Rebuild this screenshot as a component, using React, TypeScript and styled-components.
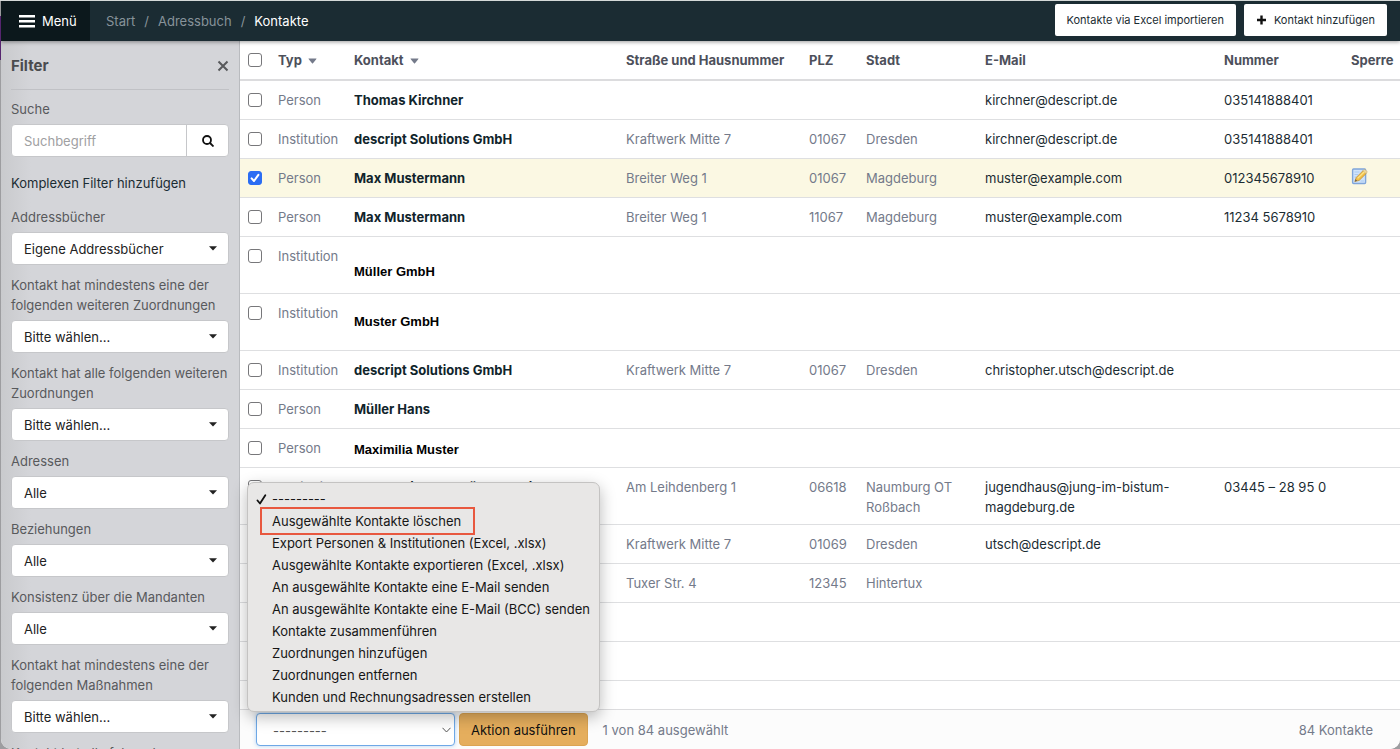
import React from 'react';
import styled, { createGlobalStyle, css } from 'styled-components';

const Global = createGlobalStyle`
  * { box-sizing: border-box; }
  html, body { margin: 0; height: 100%; }
  body {
    background: #a9a9ab;
    color: #1b2c33;
    font-family: Inter, "Liberation Sans", sans-serif;
    font-size: 13px;
    line-height: 20px;
  }
  button, input, select { font: inherit; color: inherit; margin: 0; }
  a { color: inherit; text-decoration: none; }
`;

const Desktop = styled.div`
  height: 100vh;
  padding: 1px 0 0 1px;
  background: linear-gradient(#d5d9d8 0 1px, #9a9a9c 1px 16px, #56256f 16px 60px, #9d9da0 60px);
`;

const Window = styled.div`
  display: flex;
  flex-direction: column;
  height: 100%;
  overflow: hidden;
  background: #fff;
  border-radius: 0 0 10px 10px;
`;

const TopBar = styled.header`
  position: relative;
  z-index: 1;
  display: flex;
  align-items: stretch;
  flex: none;
  height: 40px;
  padding-right: 13px;
  background: #1b2c33;
  box-shadow: 0 1px 4px rgba(0, 0, 0, 0.4);
`;

const MenuButton = styled.button`
  display: flex;
  align-items: center;
  gap: 7px;
  width: 89px;
  padding: 0 0 0 18px;
  border: 0;
  background: #0c181c;
  color: #fff;
`;

const Crumbs = styled.nav`
  display: flex;
  flex: 1;
  align-items: center;
  gap: 9px;
  padding-left: 16px;
  color: #87939a;
`;

const Crumb = styled.a<{ $current?: boolean }>`
  color: ${p => (p.$current ? '#fff' : '#87939a')};
`;

const Actions = styled.div`
  display: flex;
  align-items: flex-start;
  gap: 8px;
  padding-top: 3px;
`;

const ActionButton = styled.button`
  display: flex;
  align-items: center;
  gap: 7px;
  height: 32px;
  padding: 0 12px;
  border: 0;
  border-radius: 2px;
  background: #fff;
  font-size: 11px;
`;

const Body = styled.div`
  display: flex;
  flex: 1;
  min-height: 0;
`;

const Sidebar = styled.aside`
  flex: none;
  width: 239px;
  overflow: hidden;
  padding: 15px 10px 0;
  border-right: 1px solid #b9bbbf;
  background: linear-gradient(90deg, #c9cacd, #d4d5d9 30px);
  color: #58595c;
`;

const SidebarHead = styled.div`
  display: flex;
  align-items: center;
  justify-content: space-between;
  padding-bottom: 13px;
  margin-bottom: 9px;
  border-bottom: 1px solid #c0c1c5;
`;

const SidebarTitle = styled.h2`
  margin: 0;
  font-size: 15px;
  font-weight: 700;
  color: #4b4c4f;
`;

const CloseButton = styled.button`
  display: flex;
  padding: 0;
  border: 0;
  background: none;
  color: #58595c;
`;

const Label = styled.label`
  display: block;
  margin-bottom: 5px;
`;

const SearchGroup = styled.div`
  display: flex;
  height: 33px;
  border: 1px solid #c6c7ca;
  border-radius: 4px;
  overflow: hidden;
  background: #fff;
`;

const SearchInput = styled.input`
  flex: 1;
  min-width: 0;
  padding: 0 12px;
  border: 0;
  border-right: 1px solid #c6c7ca;
  background: none;
  &::placeholder { color: #a0a0a2; opacity: 1; }
`;

const SearchButton = styled.button`
  display: flex;
  align-items: center;
  justify-content: center;
  width: 41px;
  padding: 0;
  border: 0;
  background: none;
  color: #111;
`;

const FilterLink = styled.a`
  display: block;
  margin: 16px 0 14px;
  color: #1b2c33;
`;

const Field = styled.div`
  margin-bottom: 10px;
`;

const SelectWrap = styled.div`
  position: relative;
  display: flex;
  align-items: center;
`;

const SelectBox = styled.select<{ $active?: boolean }>`
  appearance: none;
  width: 100%;
  height: 33px;
  padding: 0 28px 0 12px;
  border: 1px solid #c6c7ca;
  border-radius: 4px;
  background: #fff;
  color: #222;
  ${p => p.$active && css`
    padding-left: 16px;
    border-color: #6ea8e6;
    box-shadow: 0 0 4px rgba(90, 160, 235, 0.45);
    color: #555;
  `}
`;

const SelectArrow = styled.svg<{ $inset: number }>`
  position: absolute;
  right: ${p => p.$inset}px;
  pointer-events: none;
`;

const Main = styled.main`
  display: flex;
  flex: 1;
  flex-direction: column;
  min-width: 0;
`;

const TableArea = styled.div`
  flex: 1;
  min-height: 0;
  overflow: hidden;
`;

const Table = styled.table`
  width: 100%;
  table-layout: fixed;
  border-collapse: separate;
  border-spacing: 0;
`;

const HeadCell = styled.th`
  height: 40px;
  padding: 0 0 0 8px;
  border-bottom: 2px solid #dcdcde;
  color: #4d505b;
  font-weight: 700;
  text-align: left;
  white-space: nowrap;
`;

const Row = styled.tr<{ $selected?: boolean; $tall?: boolean }>`
  height: ${p => (p.$tall ? 57 : 39)}px;
  background: ${p => (p.$selected ? '#fbf8e3' : '#fff')};
`;

const Cell = styled.td<{ $dark?: boolean }>`
  padding: 9px 8px 7px;
  border-bottom: 1px solid #dedfe1;
  color: ${p => (p.$dark ? '#1b2c33' : '#747a8a')};
  vertical-align: top;
`;

const NameCell = styled(Cell)`
  color: #10242b;
  font-weight: 700;
  white-space: nowrap;
`;

const PlainNameCell = styled(Cell)<{ $align: string }>`
  padding-bottom: ${p => (p.$align === 'top' ? 5 : 9)}px;
  color: #000;
  font-family: "Liberation Sans", Arial, sans-serif;
  font-weight: 700;
  line-height: 24px;
  vertical-align: ${p => p.$align};
`;

const SortArrow = styled.svg`
  margin-left: 6px;
  vertical-align: middle;
`;

const Check = styled.input`
  appearance: none;
  display: block;
  width: 14px;
  height: 14px;
  margin: 3px 0;
  border: 1px solid #77777a;
  border-radius: 3px;
  background: #fff;
  &:checked {
    border-color: #2b6df3;
    background: #2b6df3;
  }
`;

const CheckWrap = styled.span`
  position: relative;
  display: block;
  width: 14px;
`;

const CheckMark = styled.svg`
  position: absolute;
  inset: 0;
  pointer-events: none;
`;

const NoteGlyph = styled.svg`
  display: block;
`;

const Footer = styled.footer`
  display: flex;
  flex: none;
  align-items: flex-start;
  height: 40px;
  padding: 3px 27px 0 16px;
  border-top: 1px solid #dcdcde;
  background: #fcfcfc;
  color: #747a8a;
  line-height: 34px;
`;

const ActionPicker = styled(SelectWrap)`
  width: 199px;
  margin-right: 4px;
`;

const RunButton = styled.button`
  display: flex;
  align-items: center;
  height: 33px;
  padding: 0 11px;
  margin-right: 15px;
  border: 1px solid #dba452;
  border-radius: 4px;
  background: #e5ae5d;
  color: #111;
`;

const Total = styled.span`
  margin-left: auto;
`;

const Popup = styled.ul`
  position: absolute;
  bottom: 34px;
  left: -9px;
  width: 353px;
  margin: 0;
  padding: 5px 0 3px;
  border: 1px solid #c4c3c2;
  border-radius: 7px;
  background: #e8e7e6;
  box-shadow: 0 5px 16px rgba(0, 0, 0, 0.28);
  list-style: none;
`;

const PopupItem = styled.li<{ $marked?: boolean }>`
  display: flex;
  align-items: center;
  height: 22px;
  padding-left: 8px;
  color: #161616;
  white-space: nowrap;
  ${p => p.$marked && css`
    width: 215px;
    height: 28px;
    margin: -3px 0 -3px 12px;
    padding-left: 0;
    border: 2px solid #e8583f;
    & > span:first-child { width: 10px; }
  `}
`;

const Tick = styled.span`
  display: flex;
  width: 16px;
`;

type Contact = {
  type?: string;
  name?: string;
  plain?: 'top' | 'middle' | 'bottom';
  street?: string;
  zip?: string;
  city?: string;
  mail?: string;
  phone?: string;
  selected?: boolean;
  tall?: boolean;
};

const contacts: Contact[] = [
  { type: 'Person', name: 'Thomas Kirchner', mail: 'kirchner@descript.de', phone: '035141888401' },
  { type: 'Institution', name: 'descript Solutions GmbH', street: 'Kraftwerk Mitte 7', zip: '01067', city: 'Dresden', mail: 'kirchner@descript.de', phone: '035141888401' },
  { type: 'Person', name: 'Max Mustermann', street: 'Breiter Weg 1', zip: '01067', city: 'Magdeburg', mail: 'muster@example.com', phone: '012345678910', selected: true },
  { type: 'Person', name: 'Max Mustermann', street: 'Breiter Weg 1', zip: '11067', city: 'Magdeburg', mail: 'muster@example.com', phone: '11234 5678910' },
  { type: 'Institution', name: 'Müller GmbH', plain: 'bottom', tall: true },
  { type: 'Institution', name: 'Muster GmbH', plain: 'middle', tall: true },
  { type: 'Institution', name: 'descript Solutions GmbH', street: 'Kraftwerk Mitte 7', zip: '01067', city: 'Dresden', mail: 'christopher.utsch@descript.de' },
  { type: 'Person', name: 'Müller Hans' },
  { type: 'Person', name: 'Maximilia Muster', plain: 'top' },
  { type: 'Institution', name: 'Jugendbildungsstätte St. Michael', street: 'Am Leihdenberg 1', zip: '06618', city: 'Naumburg OT Roßbach', mail: 'jugendhaus@jung-im-bistum-magdeburg.de', phone: '03445 – 28 95 0', tall: true },
  { street: 'Kraftwerk Mitte 7', zip: '01069', city: 'Dresden', mail: 'utsch@descript.de' },
  { street: 'Tuxer Str. 4', zip: '12345', city: 'Hintertux' },
  {},
  {},
  {},
];

const filters = [
  ['Addressbücher', 'Eigene Addressbücher'],
  ['Kontakt hat mindestens eine der folgenden weiteren Zuordnungen', 'Bitte wählen...'],
  ['Kontakt hat alle folgenden weiteren Zuordnungen', 'Bitte wählen...'],
  ['Adressen', 'Alle'],
  ['Beziehungen', 'Alle'],
  ['Konsistenz über die Mandanten', 'Alle'],
  ['Kontakt hat mindestens eine der folgenden Maßnahmen', 'Bitte wählen...'],
  ['Kontakt hat alle folgenden Maßnahmen', 'Bitte wählen...'],
];

const actions = [
  '---------',
  'Ausgewählte Kontakte löschen',
  'Export Personen & Institutionen (Excel, .xlsx)',
  'Ausgewählte Kontakte exportieren (Excel, .xlsx)',
  'An ausgewählte Kontakte eine E-Mail senden',
  'An ausgewählte Kontakte eine E-Mail (BCC) senden',
  'Kontakte zusammenführen',
  'Zuordnungen hinzufügen',
  'Zuordnungen entfernen',
  'Kunden und Rechnungsadressen erstellen',
];

const columns = [30, 76, 272, 183, 57, 119, 239, 127, 57];

function Checkbox({ label, checked }: { label: string; checked?: boolean }) {
  return (
    <CheckWrap>
      <Check type="checkbox" aria-label={label} defaultChecked={checked} />
      {checked && (
        <CheckMark width="14" height="14" viewBox="0 0 14 14" fill="none" stroke="#fff" strokeWidth="2" strokeLinecap="round" strokeLinejoin="round">
          <path d="M3.6 7.4 6 10 10.4 3.8" />
        </CheckMark>
      )}
    </CheckWrap>
  );
}

function Sort() {
  return (
    <SortArrow width="9" height="6" viewBox="0 0 9 6" fill="#747a8a">
      <path d="M.8.4h7.4q.6 0 .2.6L5 5.2q-.5.5-1 0L.6 1Q.2.4.8.4z" />
    </SortArrow>
  );
}

function NoteIcon() {
  return (
    <NoteGlyph width="17" height="17" viewBox="0 0 17 17">
      <rect x="1.600" y="1" width="13" height="14.500" rx="1" fill="#cfe3fa" stroke="#7fa5da" strokeWidth="1.400" />
      <path d="M3.500 4h5M3.500 6.500h3.500M3.500 9h2M9.500 13h3.500" stroke="#a9caf2" />
      <path d="M3.800 13.600 5.200 9.500 12 2.700 15 5.700 8.200 12.400z" fill="#f2bf45" stroke="#b58a3c" strokeWidth=".7" />
      <path d="M12 2.700 13 1.700q.7-.5 1.300.1l1.500 1.500q.6.600 0 1.300L15 5.700z" fill="#efd9a0" stroke="#c8a96a" strokeWidth=".6" />
      <path d="M6.600 10.400 13.400 3.700" stroke="#fbe48a" strokeWidth="1.300" />
      <path d="m3.800 13.600.8-2.300 1.600 1.500z" fill="#6b5a45" />
    </NoteGlyph>
  );
}

export default function App() {
  return (
    <>
      <Global />
      <Desktop>
        <Window>
          <TopBar>
            <MenuButton type="button">
              <svg width="16" height="14" viewBox="0 0 16 14" fill="#fff">
                <path d="M0 1h16v2.400H0zM0 6h16v2.400H0zM0 11h16v2.400H0z" />
              </svg>
              Menü
            </MenuButton>
            <Crumbs>
              <Crumb href="#start">Start</Crumb>
              <span>/</span>
              <Crumb href="#adressbuch">Adressbuch</Crumb>
              <span>/</span>
              <Crumb href="#kontakte" $current>Kontakte</Crumb>
            </Crumbs>
            <Actions>
              <ActionButton type="button">Kontakte via Excel importieren</ActionButton>
              <ActionButton type="button">
                <svg width="11" height="10" viewBox="0 0 11 10" stroke="#111" strokeWidth="2.400">
                  <path d="M5.500 .5v9M1 5h9" />
                </svg>
                Kontakt hinzufügen
              </ActionButton>
            </Actions>
          </TopBar>
          <Body>
            <Sidebar>
              <SidebarHead>
                <SidebarTitle>Filter</SidebarTitle>
                <CloseButton type="button" aria-label="Filter schließen">
                  <svg width="12" height="12" viewBox="0 0 12 12" stroke="currentColor" strokeWidth="2">
                    <path d="m1.500 1.500 9 9M10.500 1.500l-9 9" />
                  </svg>
                </CloseButton>
              </SidebarHead>
              <Label htmlFor="suche">Suche</Label>
              <SearchGroup>
                <SearchInput id="suche" placeholder="Suchbegriff" />
                <SearchButton type="button" aria-label="Suchen">
                  <svg width="12" height="12" viewBox="0 0 12 12" fill="none" stroke="currentColor" strokeWidth="1.800">
                    <circle cx="5" cy="5" r="4" />
                    <path d="m8 8 3.500 3.500" />
                  </svg>
                </SearchButton>
              </SearchGroup>
              <FilterLink href="#filter">Komplexen Filter hinzufügen</FilterLink>
              {filters.map(([label, value], i) => (
                <Field key={label}>
                  <Label htmlFor={`filter-${i}`}>{label}</Label>
                  <SelectWrap>
                    <SelectBox id={`filter-${i}`}>
                      <option>{value}</option>
                    </SelectBox>
                    <SelectArrow $inset={12} width="8" height="5" viewBox="0 0 8 5" fill="#222">
                      <path d="M0 .3h8L4 4.500z" />
                    </SelectArrow>
                  </SelectWrap>
                </Field>
              ))}
            </Sidebar>
            <Main>
              <TableArea>
                <Table>
                  <colgroup>
                    {columns.map((w, i) => <col key={i} width={w} />)}
                  </colgroup>
                  <thead>
                    <tr>
                      <HeadCell><Checkbox label="Alle auswählen" /></HeadCell>
                      <HeadCell>Typ<Sort /></HeadCell>
                      <HeadCell>Kontakt<Sort /></HeadCell>
                      <HeadCell>Straße und Hausnummer</HeadCell>
                      <HeadCell>PLZ</HeadCell>
                      <HeadCell>Stadt</HeadCell>
                      <HeadCell>E-Mail</HeadCell>
                      <HeadCell>Nummer</HeadCell>
                      <HeadCell>Sperre</HeadCell>
                    </tr>
                  </thead>
                  <tbody>
                    {contacts.map((c, i) => (
                      <Row key={i} $selected={c.selected} $tall={c.tall}>
                        <Cell>{c.type && <Checkbox label={`${c.name} auswählen`} checked={c.selected} />}</Cell>
                        <Cell>{c.type}</Cell>
                        {c.plain
                          ? <PlainNameCell $align={c.plain}>{c.name}</PlainNameCell>
                          : <NameCell>{c.name}</NameCell>}
                        <Cell>{c.street}</Cell>
                        <Cell>{c.zip}</Cell>
                        <Cell>{c.city}</Cell>
                        <Cell $dark>{c.mail}</Cell>
                        <Cell $dark>{c.phone}</Cell>
                        <Cell>{c.selected && <NoteIcon />}</Cell>
                      </Row>
                    ))}
                  </tbody>
                </Table>
              </TableArea>
              <Footer>
                <ActionPicker>
                  <SelectBox $active aria-label="Aktion">
                    {actions.map(a => <option key={a}>{a}</option>)}
                  </SelectBox>
                  <SelectArrow $inset={4} width="9" height="6" viewBox="0 0 9 6" fill="none" stroke="#555">
                    <path d="M.5.8 4.500 5 8.500.8" />
                  </SelectArrow>
                  <Popup>
                    {actions.map((a, i) => (
                      <PopupItem key={a} $marked={i === 1}>
                        <Tick>
                          {i === 0 && (
                            <svg width="11" height="11" viewBox="0 0 11 11" fill="none" stroke="#111" strokeWidth="1.800" strokeLinecap="round" strokeLinejoin="round">
                              <path d="M1.500 6.500 4 9.500 9.300 1.200" />
                            </svg>
                          )}
                        </Tick>
                        {a}
                      </PopupItem>
                    ))}
                  </Popup>
                </ActionPicker>
                <RunButton type="button">Aktion ausführen</RunButton>
                <span>1 von 84 ausgewählt</span>
                <Total>84 Kontakte</Total>
              </Footer>
            </Main>
          </Body>
        </Window>
      </Desktop>
    </>
  );
}
